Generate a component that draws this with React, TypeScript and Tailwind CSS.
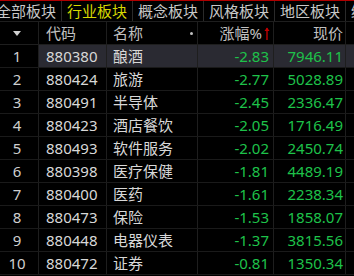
import React from "react";

const rows = [
  ["1", "880380", "酿酒", "-2.83", "7946.11"],
  ["2", "880424", "旅游", "-2.77", "5028.89"],
  ["3", "880491", "半导体", "-2.45", "2336.47"],
  ["4", "880423", "酒店餐饮", "-2.05", "1716.49"],
  ["5", "880493", "软件服务", "-2.02", "2450.74"],
  ["6", "880398", "医疗保健", "-1.81", "4489.19"],
  ["7", "880400", "医药", "-1.61", "2238.34"],
  ["8", "880473", "保险", "-1.53", "1858.07"],
  ["9", "880448", "电器仪表", "-1.37", "3815.56"],
  ["10", "880472", "证券", "-0.81", "1350.34"],
];

const tabs = ["全部板块", "行业板块", "概念板块", "风格板块", "地区板块", "绥靖板块"];

export default function App() {
  return (
    <div
      className="w-[354px] h-[276px] overflow-hidden bg-black text-[15px] leading-none"
      style={{ fontFamily: '"Noto Sans", "Noto Sans CJK SC", sans-serif' }}
    >
      <div className="h-[1px] bg-[#b00000]" />
      <div className="flex h-[21px] border-b border-[#1e1e1e] ml-[-9px] whitespace-nowrap">
        {tabs.map((t, i) => (
          <div
            key={t}
            className={`w-[71px] shrink-0 flex items-center justify-center border-r border-[#2a2a2a] ${
              i === 1 ? "text-[#d8d800]" : "text-[#c8c8c8]"
            }`}
          >
            {t}
          </div>
        ))}
      </div>
      <div className="flex h-[23px] border-b border-[#1e1e1e] text-[#c0c0c0]">
        <div className="w-[39px] shrink-0 border-r border-[#1e1e1e] flex items-center justify-center pr-[5px]">
          <svg width="8" height="5" viewBox="0 0 8 5">
            <path d="M0 0 L8 0 L4 5 Z" fill="#d0d0d0" />
          </svg>
        </div>
        <div className="w-[68px] shrink-0 border-r border-[#1e1e1e] flex items-center pl-[7px]">代码</div>
        <div className="w-[91px] shrink-0 border-r border-[#1e1e1e] flex items-center pl-[6px] relative">
          名称
          <span className="absolute right-[4px] top-[10px] w-[3px] h-[3px] rounded-full bg-[#c0c0c0]" />
        </div>
        <div className="w-[76px] shrink-0 border-r border-[#1e1e1e] flex items-center justify-end pr-[3px]">
          涨幅%
          <svg width="6" height="13" viewBox="0 0 6 13" className="ml-[2px]">
            <path d="M3 1 L3 13" stroke="#c00000" strokeWidth="1.4" />
            <path d="M0.5 4 L3 0.5 L5.5 4 Z" fill="#c00000" />
          </svg>
        </div>
        <div className="w-[72px] shrink-0 border-r border-[#1e1e1e] flex items-center justify-end pr-[2px]">现价</div>
        <div className="flex-1" />
      </div>
      {rows.map((r, i) => {
        const hl = i === 0;
        const cellBg = hl ? "bg-[#2a2a32]" : "";
        return (
          <div key={r[1]} className="flex h-[23px] border-b border-[#1a1a1a]">
            <div className="w-[39px] shrink-0 border-r border-[#1e1e1e] flex items-center justify-center pr-[4px] text-[#cfcfcf]">
              {r[0]}
            </div>
            <div className={`w-[68px] shrink-0 border-r border-[#1e1e1e] flex items-center pl-[7px] text-[#d8d8d8] ${cellBg}`}>
              {r[1]}
            </div>
            <div className={`w-[91px] shrink-0 border-r border-[#1e1e1e] flex items-center pl-[6px] text-[#d8d8d8] ${cellBg}`}>
              {r[2]}
            </div>
            <div className={`w-[76px] shrink-0 border-r border-[#1e1e1e] flex items-center justify-end pr-[4px] text-[#1ec24a] ${cellBg}`}>
              {r[3]}
            </div>
            <div className={`w-[72px] shrink-0 border-r border-[#1e1e1e] flex items-center justify-end pr-[2px] text-[#1ec24a] ${cellBg}`}>
              {r[4]}
            </div>
            <div className={`flex-1 ${cellBg}`} />
          </div>
        );
      })}
    </div>
  );
}
